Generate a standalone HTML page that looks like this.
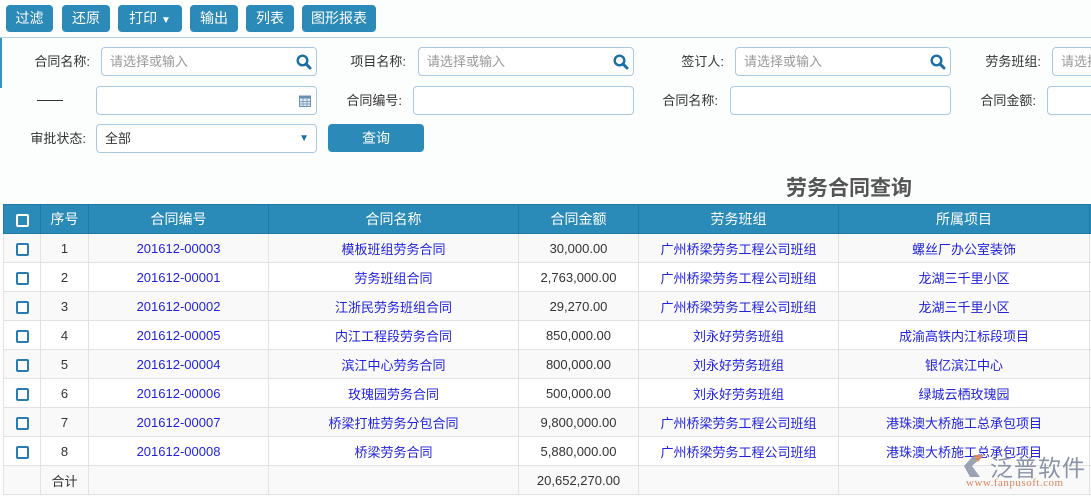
<!DOCTYPE html>
<html><head><meta charset="utf-8"><style>
*{margin:0;padding:0;box-sizing:border-box}
body{width:1091px;height:496px;overflow:hidden;background:#fcfdfd;font-family:"Liberation Sans","Noto Sans CJK SC",sans-serif;font-size:13px;color:#333;position:relative}
.a{position:absolute}
.btn{position:absolute;top:5px;height:27px;background:#2b8ab7;color:#fff;border-radius:4px;font-size:14px;line-height:27px;text-align:center}
.lbl{position:absolute;font-size:13px;color:#333;text-align:right;line-height:29px;height:29px}
.inp{position:absolute;height:29px;border:1px solid #a9c9e2;border-radius:4px;background:#fff;color:#999;font-size:13px;line-height:27px;padding-left:8px}
.srch{position:absolute;right:4px;top:6px}
table{position:absolute;left:3px;top:204px;border-collapse:collapse;table-layout:fixed;width:1100px}
td,th{height:29px;border:1px solid #e2e2e2;text-align:center;font-size:13px;font-weight:normal;white-space:nowrap;overflow:hidden}
th{background:#2a8ab8;color:#fff;border-color:#2079a3;font-size:14px}
td{color:#333}
td.l{color:#2222dd}
tr:nth-child(even) td{background:#f9f9f9}
tr:nth-child(odd) td{background:#fff}
.cb{display:inline-block;width:13px;height:13px;border:2px solid #2a7cb0;border-radius:2px;vertical-align:middle;background:#fff}
th .cb{border-color:#fff;background:transparent}
</style></head><body>
<div class="btn" style="left:6px;width:47px">过滤</div>
<div class="btn" style="left:62px;width:48px">还原</div>
<div class="btn" style="left:118px;width:64px">打印 <span style="font-size:10px">▼</span></div>
<div class="btn" style="left:190px;width:48px">输出</div>
<div class="btn" style="left:246px;width:48px">列表</div>
<div class="btn" style="left:302px;width:74px">图形报表</div>
<div class="a" style="left:0;top:37px;width:1091px;height:1px;background:#b8cfe0"></div>
<div class="a" style="left:0;top:38px;width:2px;height:50px;background:#3d8fc4"></div>

<div class="lbl" style="left:0;width:90px;top:47px">合同名称:</div>
<div class="inp" style="left:101px;top:47px;width:216px">请选择或输入<svg class="srch" width="16" height="16" viewBox="0 0 16 16"><circle cx="6.5" cy="6.5" r="4.8" fill="none" stroke="#1a6fa5" stroke-width="2.4"/><path d="M10 10l4 4" stroke="#1a6fa5" stroke-width="3" stroke-linecap="round"/></svg></div>
<div class="lbl" style="left:320px;width:86px;top:47px">项目名称:</div>
<div class="inp" style="left:418px;top:47px;width:216px">请选择或输入<svg class="srch" width="16" height="16" viewBox="0 0 16 16"><circle cx="6.5" cy="6.5" r="4.8" fill="none" stroke="#1a6fa5" stroke-width="2.4"/><path d="M10 10l4 4" stroke="#1a6fa5" stroke-width="3" stroke-linecap="round"/></svg></div>
<div class="lbl" style="left:640px;width:84px;top:47px">签订人:</div>
<div class="inp" style="left:735px;top:47px;width:216px">请选择或输入<svg class="srch" width="16" height="16" viewBox="0 0 16 16"><circle cx="6.5" cy="6.5" r="4.8" fill="none" stroke="#1a6fa5" stroke-width="2.4"/><path d="M10 10l4 4" stroke="#1a6fa5" stroke-width="3" stroke-linecap="round"/></svg></div>
<div class="lbl" style="left:960px;width:81px;top:47px">劳务班组:</div>
<div class="inp" style="left:1052px;top:47px;width:60px">请选择</div>

<div class="a" style="left:37px;top:100px;width:26px;height:1px;background:#333"></div>
<div class="inp" style="left:96px;top:86px;width:221px"><svg class="a" style="right:5px;top:7px" width="12" height="13" viewBox="0 0 12 13"><rect x="0.5" y="2" width="11" height="10.5" fill="#dde8f2" stroke="#6b8fb0"/><rect x="0.5" y="2" width="11" height="2.5" fill="#6b8fb0"/><path d="M4 4.5v8M8 4.5v8M0.5 7.5h11M0.5 10h11" stroke="#6b8fb0" stroke-width="0.7"/></svg></div>
<div class="lbl" style="left:320px;width:82px;top:86px">合同编号:</div>
<div class="inp" style="left:413px;top:86px;width:221px"></div>
<div class="lbl" style="left:640px;width:78px;top:86px">合同名称:</div>
<div class="inp" style="left:730px;top:86px;width:221px"></div>
<div class="lbl" style="left:960px;width:76px;top:86px">合同金额:</div>
<div class="inp" style="left:1047px;top:86px;width:60px"></div>

<div class="lbl" style="left:0;width:86px;top:124px">审批状态:</div>
<div class="inp" style="left:96px;top:124px;width:221px;color:#333">全部<span class="a" style="right:7px;top:0;color:#1a6fa5;font-size:10px">▼</span></div>
<div class="btn" style="left:328px;top:124px;width:96px;height:28px;line-height:28px">查询</div>

<div class="a" style="left:786px;top:172px;font-size:21px;font-weight:bold;color:#555">劳务合同查询</div>

<table>
<colgroup><col style="width:37px"><col style="width:48px"><col style="width:180px"><col style="width:250px"><col style="width:120px"><col style="width:200px"><col style="width:251px"><col style="width:14px"></colgroup>
<tr><th><span class="cb"></span></th><th>序号</th><th>合同编号</th><th>合同名称</th><th>合同金额</th><th>劳务班组</th><th>所属项目</th><th></th></tr>
<tr><td><span class="cb"></span></td><td>1</td><td class="l">201612-00003</td><td class="l">模板班组劳务合同</td><td>30,000.00</td><td class="l">广州桥梁劳务工程公司班组</td><td class="l">螺丝厂办公室装饰</td><td></td></tr>
<tr><td><span class="cb"></span></td><td>2</td><td class="l">201612-00001</td><td class="l">劳务班组合同</td><td>2,763,000.00</td><td class="l">广州桥梁劳务工程公司班组</td><td class="l">龙湖三千里小区</td><td></td></tr>
<tr><td><span class="cb"></span></td><td>3</td><td class="l">201612-00002</td><td class="l">江浙民劳务班组合同</td><td>29,270.00</td><td class="l">广州桥梁劳务工程公司班组</td><td class="l">龙湖三千里小区</td><td></td></tr>
<tr><td><span class="cb"></span></td><td>4</td><td class="l">201612-00005</td><td class="l">内江工程段劳务合同</td><td>850,000.00</td><td class="l">刘永好劳务班组</td><td class="l">成渝高铁内江标段项目</td><td></td></tr>
<tr><td><span class="cb"></span></td><td>5</td><td class="l">201612-00004</td><td class="l">滨江中心劳务合同</td><td>800,000.00</td><td class="l">刘永好劳务班组</td><td class="l">银亿滨江中心</td><td></td></tr>
<tr><td><span class="cb"></span></td><td>6</td><td class="l">201612-00006</td><td class="l">玫瑰园劳务合同</td><td>500,000.00</td><td class="l">刘永好劳务班组</td><td class="l">绿城云栖玫瑰园</td><td></td></tr>
<tr><td><span class="cb"></span></td><td>7</td><td class="l">201612-00007</td><td class="l">桥梁打桩劳务分包合同</td><td>9,800,000.00</td><td class="l">广州桥梁劳务工程公司班组</td><td class="l">港珠澳大桥施工总承包项目</td><td></td></tr>
<tr><td><span class="cb"></span></td><td>8</td><td class="l">201612-00008</td><td class="l">桥梁劳务合同</td><td>5,880,000.00</td><td class="l">广州桥梁劳务工程公司班组</td><td class="l">港珠澳大桥施工总承包项目</td><td></td></tr>
<tr><td></td><td>合计</td><td></td><td></td><td>20,652,270.00</td><td></td><td></td><td></td></tr>
</table>

<svg class="a" style="left:960px;top:452px" width="30" height="28" viewBox="0 0 30 28"><path d="M4 14L14 3h10L12 14l8 11H10z" fill="#8a94a8" opacity="0.85"/><path d="M14 3h10l-6 7z" fill="#e08a60" opacity="0.9"/></svg>
<div class="a" style="left:990px;top:449px;font-size:23px;color:#8a94a8;letter-spacing:1px">泛普软件</div>
<div class="a" style="left:966px;top:477px;font-size:11px;color:#d9875e;font-family:'Liberation Serif',serif;letter-spacing:0.5px">www.fanpusoft.com</div>
</body></html>
